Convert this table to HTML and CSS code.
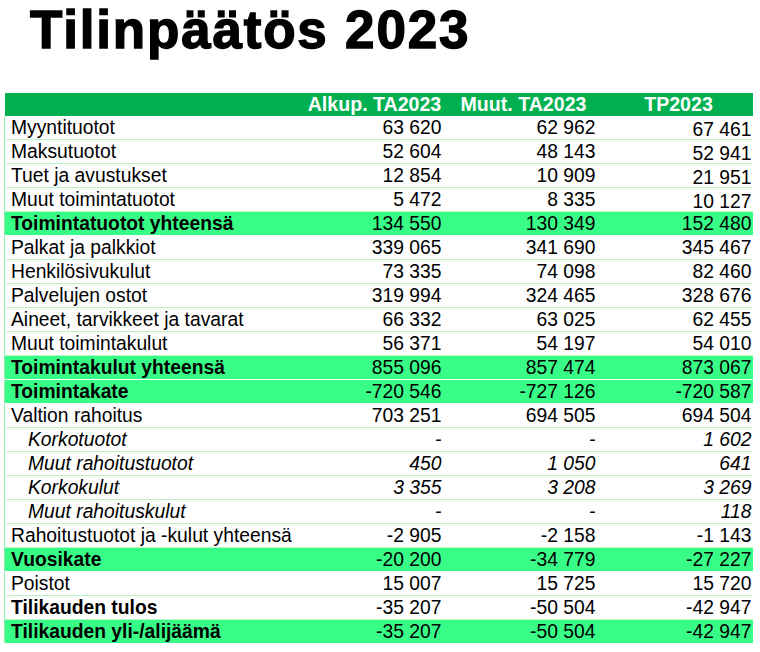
FILE: index.html
```html
<!DOCTYPE html>
<html lang="fi">
<head>
<meta charset="utf-8">
<title>Tilinpäätös 2023</title>
<link rel="stylesheet" href="styles.css">
</head>
<body>
<h1 class="title">Tilinpäätös 2023</h1>
<table class="fin">
  <colgroup>
    <col class="c-label"><col class="c-num"><col class="c-num"><col class="c-num">
  </colgroup>
  <thead>
    <tr><th></th><th class="h-alk">Alkup. TA2023</th><th class="h-muut">Muut. TA2023</th><th class="h-tp">TP2023</th></tr>
  </thead>
  <tbody>
    <tr><td>Myyntituotot</td><td>63 620</td><td>62 962</td><td class="low">67 461</td></tr>
    <tr><td>Maksutuotot</td><td>52 604</td><td>48 143</td><td class="low">52 941</td></tr>
    <tr><td>Tuet ja avustukset</td><td>12 854</td><td>10 909</td><td class="low">21 951</td></tr>
    <tr><td>Muut toimintatuotot</td><td>5 472</td><td>8 335</td><td class="low">10 127</td></tr>
    <tr class="sum"><td>Toimintatuotot yhteensä</td><td>134 550</td><td>130 349</td><td>152 480</td></tr>
    <tr><td>Palkat ja palkkiot</td><td>339 065</td><td>341 690</td><td>345 467</td></tr>
    <tr><td>Henkilösivukulut</td><td>73 335</td><td>74 098</td><td>82 460</td></tr>
    <tr><td>Palvelujen ostot</td><td>319 994</td><td>324 465</td><td>328 676</td></tr>
    <tr><td>Aineet, tarvikkeet ja tavarat</td><td>66 332</td><td>63 025</td><td>62 455</td></tr>
    <tr><td>Muut toimintakulut</td><td>56 371</td><td>54 197</td><td>54 010</td></tr>
    <tr class="sum"><td>Toimintakulut yhteensä</td><td>855 096</td><td>857 474</td><td>873 067</td></tr>
    <tr class="sum"><td>Toimintakate</td><td>-720 546</td><td>-727 126</td><td>-720 587</td></tr>
    <tr><td>Valtion rahoitus</td><td>703 251</td><td>694 505</td><td>694 504</td></tr>
    <tr class="sub"><td>Korkotuotot</td><td>-</td><td>-</td><td>1 602</td></tr>
    <tr class="sub"><td>Muut rahoitustuotot</td><td>450</td><td>1 050</td><td>641</td></tr>
    <tr class="sub"><td>Korkokulut</td><td>3 355</td><td>3 208</td><td>3 269</td></tr>
    <tr class="sub"><td>Muut rahoituskulut</td><td>-</td><td>-</td><td>118</td></tr>
    <tr><td>Rahoitustuotot ja -kulut yhteensä</td><td>-2 905</td><td>-2 158</td><td>-1 143</td></tr>
    <tr class="sum"><td>Vuosikate</td><td>-20 200</td><td>-34 779</td><td>-27 227</td></tr>
    <tr><td>Poistot</td><td>15 007</td><td>15 725</td><td>15 720</td></tr>
    <tr class="bold"><td>Tilikauden tulos</td><td>-35 207</td><td>-50 504</td><td>-42 947</td></tr>
    <tr class="sum"><td>Tilikauden yli-/alijäämä</td><td>-35 207</td><td>-50 504</td><td>-42 947</td></tr>
  </tbody>
</table>
</body>
</html>
```

FILE: styles.css
```css
html, body {
  margin: 0;
  padding: 0;
  background: #ffffff;
}

body {
  font-family: "Liberation Sans", Arial, sans-serif;
  color: #000000;
}

.title {
  margin: 0;
  padding: 0 0 0 30px;
  height: 93px;
  font-size: 53px;
  line-height: 59px;
  font-weight: 700;
  letter-spacing: 1.8px;
  -webkit-text-stroke: 1.4px #000;
}

.fin {
  margin-left: 4px;
  width: 748px;
  border-collapse: collapse;
  table-layout: fixed;
  font-size: 19.3px;
}

.c-label { width: 286px; }
.c-num { width: 154px; }

.fin thead th {
  background: #00b050;
  color: #ffffff;
  font-weight: 700;
  font-size: 19.6px;
  height: 23px;
  padding: 0;
  text-align: center;
  line-height: 23px;
  white-space: nowrap;
}

.fin thead th.h-alk { padding-left: 14px; }
.fin thead th.h-muut { padding-left: 4px; }
.fin thead th.h-tp { padding-left: 6px; }

.fin tbody td {
  height: 23px;
  padding: 0 3px 0 0;
  line-height: 18px;
  text-align: right;
  vertical-align: middle;
  border-bottom: 1px solid #b6f7c8;
  white-space: nowrap;
}

.fin tbody td:first-child {
  text-align: left;
  padding-left: 6px;
  border-left: 1px solid #8ef0ab;
}

.fin tbody td:last-child { padding-right: 1px; }

.fin tbody td.low {
  height: 18px;
  padding-top: 5px;
  vertical-align: top;
}

.fin tbody tr.sum td {
  background: #38fe88;
  border-bottom-color: #ffffff;
}

.fin tbody tr.sum td:first-child,
.fin tbody tr.bold td:first-child {
  font-weight: 700;
}

.fin tbody tr.sub td { font-style: italic; }
.fin tbody tr.sub td:first-child { padding-left: 23px; }
```
